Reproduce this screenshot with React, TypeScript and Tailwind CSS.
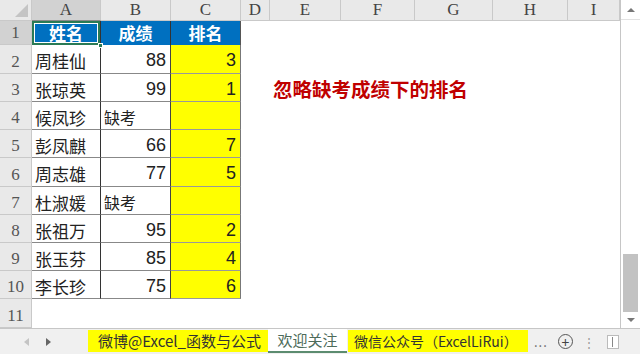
import React from "react";

const cjk = '"Noto Sans CJK SC", "Noto Sans", sans-serif';
const serif = '"Liberation Serif", "DejaVu Serif", serif';
const num = '"Liberation Sans", Arial, sans-serif';

interface Row {
  name: string;
  score: string;
  rank: string;
}

const rows: Row[] = [
  { name: "周桂仙", score: "88", rank: "3" },
  { name: "张琼英", score: "99", rank: "1" },
  { name: "候凤珍", score: "缺考", rank: "" },
  { name: "彭凤麒", score: "66", rank: "7" },
  { name: "周志雄", score: "77", rank: "5" },
  { name: "杜淑媛", score: "缺考", rank: "" },
  { name: "张祖万", score: "95", rank: "2" },
  { name: "张玉芬", score: "85", rank: "4" },
  { name: "李长珍", score: "75", rank: "6" },
];

// 행 높이 (2~11행)
const rowHeights = ["h-[29px]", "h-[28px]", "h-[28px]", "h-[28px]", "h-[29px]", "h-[28px]", "h-[28px]", "h-[28px]", "h-[28px]", "h-[29px]"];

const colHeads = [
  { label: "A", w: "w-[69px]", active: true },
  { label: "B", w: "w-[70px]" },
  { label: "C", w: "w-[70px]" },
  { label: "D", w: "w-[29px]" },
  { label: "E", w: "w-[71px]" },
  { label: "F", w: "w-[74px]" },
  { label: "G", w: "w-[78px]" },
  { label: "H", w: "w-[75px]" },
  { label: "I", w: "w-[52px]" },
];

const RowHead: React.FC<{ n: number; active?: boolean }> = ({ n, active }) => (
  <div
    className={`w-[32px] shrink-0 flex items-end justify-center pb-[1px] border-r border-b border-[#c9c9c9] text-[17px] leading-[20px] text-[#555] ${
      active ? "bg-[#d2d2d2]" : "bg-[#e9e9e9]"
    }`}
    style={{ fontFamily: serif }}
  >
    {n}
  </div>
);

const App: React.FC = () => {
  return (
    <div className="w-[640px] h-[354px] flex flex-col bg-white overflow-hidden" style={{ fontFamily: cjk }}>
      <div className="flex h-[328px]">
        {/* 시트 영역 */}
        <div className="w-[620px] flex flex-col overflow-hidden">
          {/* 열 머리글 */}
          <div className="flex h-[21px] shrink-0">
            <div className="w-[32px] shrink-0 bg-[#e9e9e9] border-r border-b border-[#c9c9c9] flex items-end justify-end p-[3px]">
              <div className="w-0 h-0 border-l-[13px] border-l-transparent border-b-[13px] border-b-[#c4c4c4]" />
            </div>
            {colHeads.map((c) => (
              <div
                key={c.label}
                className={`${c.w} shrink-0 flex items-center justify-center border-r border-b text-[17px] text-[#444] ${
                  c.active ? "bg-[#d2d2d2] border-b-[#8a8a8a] border-r-[#c9c9c9]" : "bg-[#e9e9e9] border-[#c9c9c9]"
                }`}
                style={{ fontFamily: serif }}
              >
                {c.label}
              </div>
            ))}
          </div>

          {/* 1행 */}
          <div className="flex h-[24px] shrink-0">
            <RowHead n={1} active />
            <div className="relative w-[69px] shrink-0 bg-[#0070c0] flex items-center justify-center text-white font-bold text-[17px] border-r border-[#333]">
              姓名
              <div className="absolute inset-0 border-2 border-[#2a7a55] shadow-[inset_0_0_0_1px_#ffffff]" />
              <div className="absolute -right-[3px] -bottom-[3px] w-[5px] h-[5px] bg-[#2a7a55] border border-white" />
            </div>
            <div className="w-[70px] shrink-0 bg-[#0070c0] flex items-center justify-center text-white font-bold text-[17px] border-r border-[#333]">
              成绩
            </div>
            <div className="w-[70px] shrink-0 bg-[#0070c0] flex items-center justify-center text-white font-bold text-[17px] border-r border-[#555]">
              排名
            </div>
          </div>

          {/* 데이터 행 */}
          {rows.map((r, i) => {
            const isNum = r.score !== "缺考";
            return (
              <div key={i} className={`flex ${rowHeights[i]} shrink-0`}>
                <RowHead n={i + 2} />
                <div className="w-[69px] shrink-0 flex items-center px-[3px] pt-[3px] leading-none text-[17px] text-[#222] border-r border-b border-[#333] border-b-[#888]">
                  {r.name}
                </div>
                <div
                  className={`w-[70px] shrink-0 flex items-center pt-[2px] leading-none text-[#222] border-r border-b border-[#444] border-b-[#888] ${
                    isNum ? "justify-end pr-[4px] text-[18px]" : "pl-[3px] text-[16px]"
                  }`}
                  style={isNum ? { fontFamily: num } : undefined}
                >
                  {r.score}
                </div>
                <div
                  className="w-[70px] shrink-0 bg-[#ffff00] flex items-center justify-end pr-[4px] pt-[2px] leading-none text-[18px] text-[#222] border-r border-b border-[#777] border-b-[#999]"
                  style={{ fontFamily: num }}
                >
                  {r.rank}
                </div>
                <div className="w-[29px] shrink-0" />
                {i === 1 && (
                  <div className="flex items-center pl-[3px] pt-[2px] whitespace-nowrap text-[19.5px] font-bold text-[#c00000]">
                    忽略缺考成绩下的排名
                  </div>
                )}
              </div>
            );
          })}

          {/* 11행 */}
          <div className="flex h-[29px] shrink-0">
            <RowHead n={11} />
          </div>
        </div>

        {/* 세로 스크롤바 */}
        <div className="w-[20px] flex flex-col border-l border-[#c6c6c6] bg-white">
          <div className="h-[20px] flex items-center justify-center border-b border-[#e2e2e2]">
            <div className="w-0 h-0 border-l-[4px] border-l-transparent border-r-[4px] border-r-transparent border-b-[4px] border-b-[#777]" />
          </div>
          <div className="flex-1 flex flex-col justify-end px-[2px]">
            <div className="h-[58px] bg-[#c2c2c2]" />
          </div>
          <div className="h-[16px] flex items-center justify-center">
            <div className="w-0 h-0 border-l-[4px] border-l-transparent border-r-[4px] border-r-transparent border-t-[4px] border-t-[#777]" />
          </div>
        </div>
      </div>

      {/* 시트 탭 */}
      <div className="h-[26px] flex items-start bg-[#f0f0f0] border-t border-[#c6c6c6]">
        <div className="w-[88px] h-full flex items-center gap-[17px] pl-[24px]">
          <div className="w-0 h-0 border-t-[4px] border-t-transparent border-b-[4px] border-b-transparent border-r-[5px] border-r-[#c4c4c4]" />
          <div className="w-0 h-0 border-t-[4px] border-t-transparent border-b-[4px] border-b-transparent border-l-[5px] border-l-[#666]" />
        </div>
        <div className="w-[180px] h-[22px] mt-[1px] bg-[#ffff00] flex items-center pl-[10px] text-[15px] text-[#333] whitespace-nowrap">
          微博@Excel_函数与公式
        </div>
        <div className="w-[79px] h-[24px] bg-white flex items-center justify-center text-[15px] text-[#4d6b5a] border-b-2 border-[#5c8c70] whitespace-nowrap">
          欢迎关注
        </div>
        <div className="w-[180px] h-[22px] mt-[1px] ml-[1px] bg-[#ffff00] flex items-center pl-[6px] text-[14px] text-[#333] whitespace-nowrap">
          微信公众号（ExcelLiRui）
        </div>
        <div className="h-full flex items-center pl-[6px] text-[13px] text-[#666] tracking-[1px]">...</div>
        <div className="h-full flex items-center pl-[10px]">
          <div className="w-[15px] h-[15px] rounded-full border border-[#555] flex items-center justify-center text-[#444] text-[14px] leading-none">
            +
          </div>
        </div>
        <div className="h-full flex items-center pl-[10px] text-[12px] text-[#999]">⋮</div>
        <div className="h-full flex items-center pl-[12px]">
          <div className="w-[12px] h-[14px] border border-[#bbb] bg-white flex items-center justify-center">
            <div className="w-[1px] h-[10px] bg-[#888]" />
          </div>
        </div>
      </div>
    </div>
  );
};

export default App;
